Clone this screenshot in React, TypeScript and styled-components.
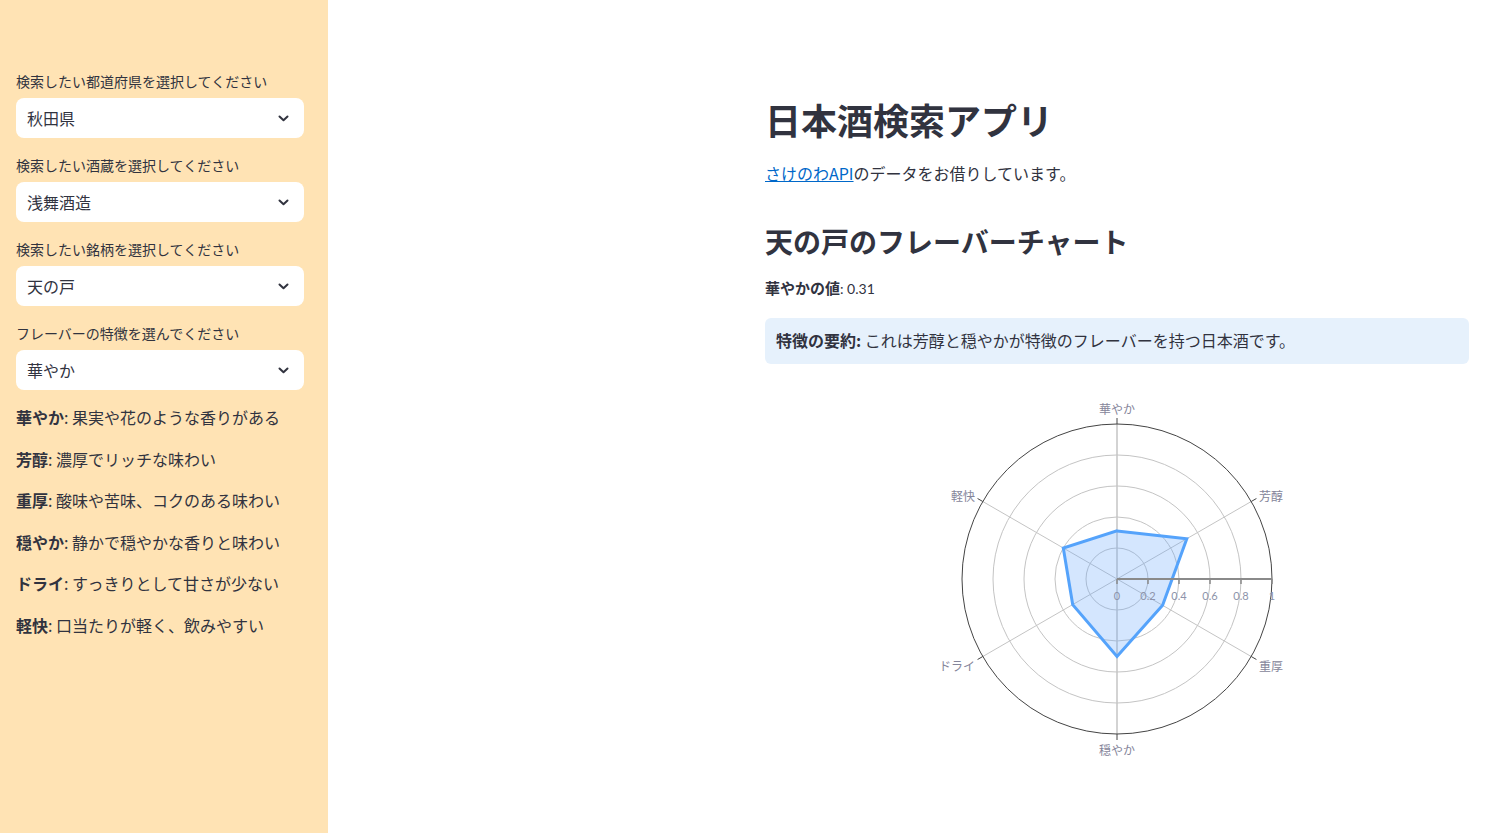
import React from "react";
import styled, { createGlobalStyle } from "styled-components";

const GlobalStyle = createGlobalStyle`
  html, body { margin: 0; padding: 0; background: #ffffff; }
  body {
    font-family: "Lato", "Noto Sans CJK JP", sans-serif;
    color: #31333F;
  }
  * { box-sizing: border-box; }
`;

const Page = styled.div`
  display: flex;
  width: 1496px;
  min-height: 833px;
`;

const Sidebar = styled.aside`
  width: 328px;
  flex-shrink: 0;
  background: #ffe3b4;
  padding: 71px 24px 0 16px;
  display: flex;
  flex-direction: column;
`;

const Field = styled.div`
  display: flex;
  flex-direction: column;
  gap: 7px;
  margin-bottom: 17px;
  &:last-of-type { margin-bottom: 15px; }
`;

const FieldLabel = styled.label`
  font-size: 14px;
  line-height: 20px;
  height: 20px;
  color: #31333F;
  font-family: "Noto Sans CJK JP", sans-serif;
`;

const SelectBox = styled.div`
  height: 40px;
  background: #ffffff;
  border-radius: 8px;
  display: flex;
  align-items: center;
  justify-content: space-between;
  padding: 0 15px 0 11px;
  font-size: 16px;
  font-family: "Noto Sans CJK JP", sans-serif;
  color: #31333F;
`;

const Desc = styled.p`
  margin: 0 0 16px 0;
  font-size: 16px;
  line-height: 25.6px;
  font-family: "Noto Sans CJK JP", sans-serif;
  color: #31333F;
  & b { font-weight: 700; }
`;

const Main = styled.main`
  flex: 1;
  display: flex;
  justify-content: flex-end;
  padding: 97px 27px 0 0;
`;

const Content = styled.div`
  width: 704px;
  display: flex;
  flex-direction: column;
`;

const Title = styled.h1`
  margin: 0;
  font-size: 36px;
  line-height: 44px;
  font-weight: 700;
  font-family: "Noto Sans CJK JP", sans-serif;
  color: #31333F;
`;

const Lead = styled.p`
  margin: 20px 0 0 0;
  font-size: 16px;
  line-height: 24px;
  font-family: "Noto Sans CJK JP", sans-serif;
  & a { color: #0068c9; text-decoration: underline; }
`;

const SubTitle = styled.h2`
  margin: 38px 0 0 0;
  font-size: 28px;
  line-height: 36px;
  font-weight: 700;
  font-family: "Noto Sans CJK JP", sans-serif;
  color: #31333F;
`;

const ValueLine = styled.p`
  margin: 17px 0 0 0;
  font-size: 14px;
  line-height: 24px;
  & b { font-size: 15px; font-family: "Noto Sans CJK JP", sans-serif; font-weight: 700; }
  & span { font-family: "Lato", sans-serif; }
`;

const InfoBox = styled.div`
  margin-top: 17px;
  height: 46px;
  background: #e6f1fc;
  border-radius: 6px;
  display: flex;
  align-items: center;
  padding: 0 11px 2px 11px;
  font-size: 16px;
  font-family: "Noto Sans CJK JP", sans-serif;
  color: #31333F;
  & b { font-weight: 700; }
`;

const ChartWrap = styled.div`
  margin-top: 27px;
  display: flex;
  justify-content: center;
`;

const Chevron = () => (
  <svg width="11" height="7" viewBox="0 0 11 7">
    <path d="M1.5 1.5 L5.5 5.3 L9.5 1.5" fill="none" stroke="#31333F" strokeWidth="2" strokeLinecap="round" strokeLinejoin="round" />
  </svg>
);

const axes = [
  { name: "華やか", v: 0.31 },
  { name: "芳醇", v: 0.52 },
  { name: "重厚", v: 0.34 },
  { name: "穏やか", v: 0.5 },
  { name: "ドライ", v: 0.33 },
  { name: "軽快", v: 0.4 },
];

const RadarChart = () => {
  const W = 400;
  const H = 380;
  const cx = 200;
  const cy = 188;
  const R = 155;
  const pt = (k: number, r: number) => {
    const th = ((90 - 60 * k) * Math.PI) / 180;
    return [cx + r * Math.cos(th), cy - r * Math.sin(th)];
  };
  const poly = axes.map((a, k) => pt(k, a.v * R).map((n) => n.toFixed(1)).join(",")).join(" ");
  const labelColor = "#85859a";
  return (
    <svg width={W} height={H} viewBox={`0 0 ${W} ${H}`}>
      {[0.2, 0.4, 0.6, 0.8].map((r) => (
        <circle key={r} cx={cx} cy={cy} r={r * R} fill="none" stroke="#c4c4c4" strokeWidth="1" />
      ))}
      {axes.map((a, k) => {
        const [x, y] = pt(k, R);
        return <line key={a.name} x1={cx} y1={cy} x2={x} y2={y} stroke="#c4c4c4" strokeWidth={k % 3 === 0 ? 1.5 : 1} />;
      })}
      <circle cx={cx} cy={cy} r={R} fill="none" stroke="#444" strokeWidth="1" />
      {axes.map((a, k) => {
        const [x1, y1] = pt(k, R);
        const [x2, y2] = pt(k, R + 6);
        return <line key={"t" + a.name} x1={x1} y1={y1} x2={x2} y2={y2} stroke="#444" strokeWidth="1" />;
      })}
      <polygon points={poly} fill="rgba(99,164,250,0.28)" stroke="#55a3fb" strokeWidth="3" strokeLinejoin="miter" />
      <line x1={cx} y1={cy} x2={cx + R} y2={cy} stroke="#8a8a8a" strokeWidth="2" />
      {[0, 0.2, 0.4, 0.6, 0.8, 1].map((t) => (
        <g key={t}>
          <line x1={cx + t * R} y1={cy} x2={cx + t * R} y2={cy + 5} stroke="#8a8a8a" strokeWidth="1.5" />
          <text
            x={cx + t * R}
            y={cy + 21}
            textAnchor="middle"
            fontSize="11"
            fill="#8d93aa"
            fontFamily="Lato, 'Noto Sans', sans-serif"
          >
            {t === 0 ? "0" : t === 1 ? "1" : t.toFixed(1)}
          </text>
        </g>
      ))}
      <text x={cx} y={cy - R - 10} textAnchor="middle" fontSize="12" fill={labelColor} fontFamily="'Noto Sans CJK JP', sans-serif">華やか</text>
      <text x={pt(1, R + 9)[0]} y={pt(1, R + 9)[1] + 4} textAnchor="start" fontSize="12" fill={labelColor} fontFamily="'Noto Sans CJK JP', sans-serif">芳醇</text>
      <text x={pt(2, R + 9)[0]} y={pt(2, R + 9)[1] + 10} textAnchor="start" fontSize="12" fill={labelColor} fontFamily="'Noto Sans CJK JP', sans-serif">重厚</text>
      <text x={cx} y={cy + R + 21} textAnchor="middle" fontSize="12" fill={labelColor} fontFamily="'Noto Sans CJK JP', sans-serif">穏やか</text>
      <text x={pt(4, R + 9)[0]} y={pt(4, R + 9)[1] + 10} textAnchor="end" fontSize="12" fill={labelColor} fontFamily="'Noto Sans CJK JP', sans-serif">ドライ</text>
      <text x={pt(5, R + 9)[0]} y={pt(5, R + 9)[1] + 4} textAnchor="end" fontSize="12" fill={labelColor} fontFamily="'Noto Sans CJK JP', sans-serif">軽快</text>
    </svg>
  );
};

const fields = [
  { label: "検索したい都道府県を選択してください", value: "秋田県" },
  { label: "検索したい酒蔵を選択してください", value: "浅舞酒造" },
  { label: "検索したい銘柄を選択してください", value: "天の戸" },
  { label: "フレーバーの特徴を選んでください", value: "華やか" },
];

const descs = [
  ["華やか", "果実や花のような香りがある"],
  ["芳醇", "濃厚でリッチな味わい"],
  ["重厚", "酸味や苦味、コクのある味わい"],
  ["穏やか", "静かで穏やかな香りと味わい"],
  ["ドライ", "すっきりとして甘さが少ない"],
  ["軽快", "口当たりが軽く、飲みやすい"],
];

export default function App() {
  return (
    <Page>
      <GlobalStyle />
      <Sidebar>
        {fields.map((f) => (
          <Field key={f.label}>
            <FieldLabel>{f.label}</FieldLabel>
            <SelectBox>
              <span>{f.value}</span>
              <Chevron />
            </SelectBox>
          </Field>
        ))}
        {descs.map(([k, v]) => (
          <Desc key={k}>
            <b>{k}</b>: {v}
          </Desc>
        ))}
      </Sidebar>
      <Main>
        <Content>
          <Title>日本酒検索アプリ</Title>
          <Lead>
            <a href="#">さけのわAPI</a>のデータをお借りしています。
          </Lead>
          <SubTitle>天の戸のフレーバーチャート</SubTitle>
          <ValueLine>
            <b>華やかの値</b>: <span>0.31</span>
          </ValueLine>
          <InfoBox>
            <b>特徴の要約:</b>&nbsp;これは芳醇と穏やかが特徴のフレーバーを持つ日本酒です。
          </InfoBox>
          <ChartWrap>
            <RadarChart />
          </ChartWrap>
        </Content>
      </Main>
    </Page>
  );
}
